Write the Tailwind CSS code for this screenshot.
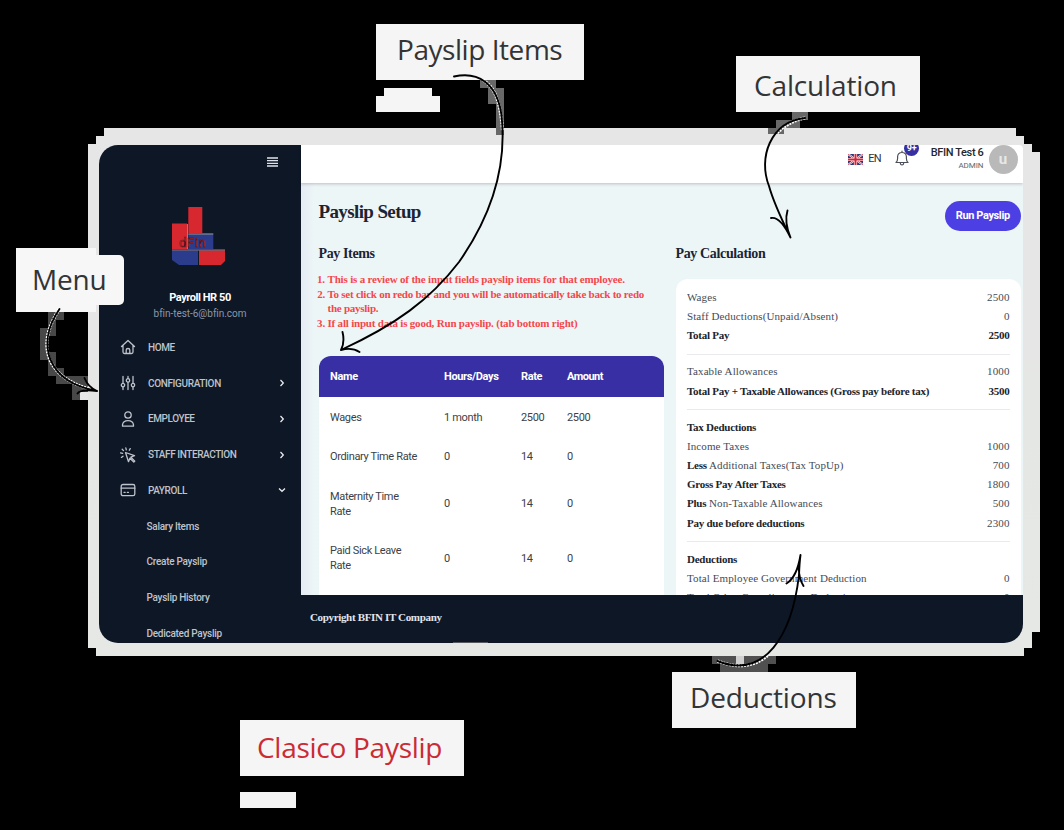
<!DOCTYPE html>
<html lang="en">
<head>
<meta charset="utf-8">
<title>Clasico Payslip</title>
<script src="https://cdn.jsdelivr.net/npm/@tailwindcss/browser@4"></script>
</head>
<body class="relative h-[830px] w-[1064px] overflow-hidden bg-black pt-32 pl-[88px]">

<!-- Device frame -->
<div class="h-[528px] w-[952px] bg-linear-to-b from-[#e5e6e5] to-[#e6e8e5] pt-[17px] pl-[11px] [clip-path:polygon(16px_0,928px_0,928px_8px,936px_8px,936px_16px,944px_16px,944px_24px,952px_24px,952px_504px,944px_504px,944px_520px,936px_520px,936px_528px,8px_528px,8px_520px,0_520px,0_16px,8px_16px,8px_8px,16px_8px)]">
  <div class="flex h-[498px] w-[923.5px] overflow-hidden rounded-l-[19px] rounded-tr-[4px] rounded-br-[19px] bg-[#edf6f7] font-['Roboto',sans-serif]">

    <!-- Sidebar -->
    <aside class="flex h-full w-[202px] shrink-0 flex-col overflow-hidden bg-[#0e1726] text-[#bfc3cb]">
      <div class="flex justify-end pt-3 pr-[23px]">
        <svg class="h-2.5 w-[11px]" viewBox="0 0 11 10" stroke="#dfe3ea" stroke-width="1.3"><path d="M0 1h11M0 3.7h11M0 6.3h11M0 9h11"/></svg>
      </div>
      <div class="flex flex-col items-center pt-10">
        <svg class="mr-[3px] h-[59px] w-[53px]" viewBox="0 0 53 59">
          <path d="M16.3 0h14v26h-14z" fill="#d7282f"/>
          <path d="M0 16.5h15V42H0z" fill="#d7282f"/>
          <path d="M16.3 27.500h25V42h-25z" fill="#2b3c8c"/>
          <path d="M16.300 27h25" stroke="#c9cbe0" stroke-width=".8"/>
          <path d="M0 43.500h26V58H7L0 53z" fill="#2b3c8c"/>
          <path d="M27 43.500h26V54l-4 4H27z" fill="#d7282f"/>
          <path d="M0 43h53M15.500 17v25" stroke="#c9b0b8" stroke-width=".7"/>
          <text x="7" y="40" font-family="Roboto" font-size="13" fill="#e0392f" stroke="#3a1020" stroke-width=".5" textLength="27">dFin</text>
        </svg>
        <p class="mt-[24px] text-[11px] leading-4 font-bold tracking-[-0.43px] text-white">Payroll HR 50</p>
        <p class="text-[10px] leading-4 tracking-[-0.04px] text-[#8d97a8]">bfin-test-6@bfin.com</p>
      </div>
      <nav class="mt-[7.500px] text-[10px] font-medium tracking-[-0.42px]">
        <a class="flex h-[35.750px] items-center pr-[15px] pl-[21px]">
          <svg class="mr-[12px] h-4 w-4" viewBox="0 0 16 16" fill="none" stroke="#bfc3cb" stroke-width="1.3" stroke-linejoin="round" stroke-linecap="round"><path d="M1.500 7.500 8 1.500l6.500 6M3 6.500V13q0 1.500 1.500 1.500h7Q13 14.500 13 13V6.500M6.200 14.500V11q0-1.500 1.800-1.500T9.800 11v3.500"/></svg>HOME</a>
        <a class="flex h-[35.750px] items-center pr-[15px] pl-[21px]">
          <svg class="mr-[12px] h-4 w-4" viewBox="0 0 16 16" fill="none" stroke="#bfc3cb" stroke-width="1.300" stroke-linecap="round"><path d="M3 1.500v6.700M3 12v2.500M8 1.500v2M8 7.300v7.200M13 1.500v6.700M13 12v2.500"/><circle cx="3" cy="10.100" r="1.700"/><circle cx="8" cy="5.400" r="1.700"/><circle cx="13" cy="10.100" r="1.700"/></svg><span class="grow tracking-[-0.35px]">CONFIGURATION</span>
          <svg class="h-2 w-2" viewBox="0 0 8 8" fill="none" stroke="#e8eaee" stroke-width="1.300"><path d="m2.500 1 2.800 3-2.800 3"/></svg></a>
        <a class="flex h-[35.750px] items-center pr-[15px] pl-[21px]">
          <svg class="mr-[12px] h-4 w-4" viewBox="0 0 16 16" fill="none" stroke="#bfc3cb" stroke-width="1.300" stroke-linejoin="round"><circle cx="8" cy="4" r="3.200"/><path d="M2.500 15.200v-1.400Q3 9.700 8 9.700t5.500 4.100v1.400z"/></svg><span class="grow">EMPLOYEE</span>
          <svg class="h-2 w-2" viewBox="0 0 8 8" fill="none" stroke="#e8eaee" stroke-width="1.300"><path d="m2.500 1 2.800 3-2.800 3"/></svg></a>
        <a class="flex h-[35.750px] items-center pr-[15px] pl-[21px]">
          <svg class="mr-[12px] h-4 w-4" viewBox="0 0 16 16" fill="none" stroke="#bfc3cb" stroke-width="1.300" stroke-linejoin="round" stroke-linecap="round"><path d="m5.500 5.500 9 3.200-3.600 1.500 3.900 3.900-1 1-3.900-3.900-1.400 3.500zM5.800.8l.5 2M2.200 2.200l1.300 1.400M.6 5.800l2 .5M1.400 10.400l1.600-1.200M10.200 1.600 9.300 3.200"/></svg><span class="grow">STAFF INTERACTION</span>
          <svg class="h-2 w-2" viewBox="0 0 8 8" fill="none" stroke="#e8eaee" stroke-width="1.300"><path d="m2.500 1 2.800 3-2.800 3"/></svg></a>
        <a class="flex h-[35.750px] items-center pr-[15px] pl-[21px]">
          <svg class="mr-[12px] h-4 w-4" viewBox="0 0 16 16" fill="none" stroke="#bfc3cb" stroke-width="1.300" stroke-linecap="round"><rect x="1.200" y="2.500" width="13.600" height="11.200" rx="1.800"/><path d="M1.200 6.200h13.600M4 10.300h1.200M7.300 10.300h1.200"/></svg><span class="grow">PAYROLL</span>
          <svg class="h-2 w-2" viewBox="0 0 8 8" fill="none" stroke="#e8eaee" stroke-width="1.300"><path d="m1 2.500 3 2.800 3-2.800"/></svg></a>
        <div class="pl-[47.500px] tracking-[-0.27px]">
          <a class="flex h-[35.750px] items-center">Salary Items</a>
          <a class="flex h-[35.750px] items-center">Create Payslip</a>
          <a class="flex h-[35.750px] items-center">Payslip History</a>
          <a class="flex h-[35.750px] items-center">Dedicated Payslip</a>
        </div>
      </nav>
    </aside>

    <div class="flex min-w-0 grow flex-col">
      <!-- Top bar -->
      <header class="z-10 flex h-[38px] shrink-0 justify-end bg-white pr-[5px] shadow-[0_1px_3px_rgba(0,0,0,0.22)]">
        <svg class="mt-[9px] h-[11px] w-[15px]" viewBox="0 0 15 11"><path fill="#283a7e" d="M0 0h15v11H0z"/><path d="m0 0 15 11M15 0 0 11" stroke="#fff" stroke-width="1.900"/><path d="m0 0 15 11M15 0 0 11" stroke="#d3243a" stroke-width=".8"/><path d="M7.500 0v11M0 5.500h15" stroke="#fff" stroke-width="3.200"/><path d="M7.500 0v11M0 5.500h15" stroke="#d3243a" stroke-width="2"/></svg>
        <span class="mt-[6px] ml-[5px] w-[14px] text-[11px] leading-4 tracking-[-0.7px] text-[#333]">EN</span>
        <div class="relative ml-[12px] w-4">
          <svg class="mt-[5px] h-4 w-4" viewBox="0 0 16 16" fill="none" stroke="#4b4f57" stroke-width="1.200" stroke-linecap="round" stroke-linejoin="round"><path d="M2 12.500q1.600-1.500 1.600-4V6.800Q3.800 2.500 8 2.500t4.400 4.300v1.700q0 2.500 1.600 4zM8 2.500V1.200M6.200 13q.3 2 1.800 2t1.800-2"/></svg>
          <span class="absolute -top-[4px] left-[10px] flex h-[15px] w-[15px] items-center justify-center rounded-full bg-[#3730a3] text-[9px] leading-none font-bold tracking-[-0.2px] text-white">9+</span>
        </div>
        <div class="ml-[20.500px] flex flex-col items-end">
          <p class="text-[11px] leading-[15px] font-medium tracking-[-0.36px] text-[#26282e]">BFIN Test 6</p>
          <p class="text-[8px] leading-[12px] tracking-[-0.050px] text-[#666]">ADMIN</p>
        </div>
        <div class="ml-[5px] flex h-[29px] w-[29px] items-center justify-center rounded-full bg-[#b9b9b9] pb-px text-[15px] font-bold text-[#e8e8e8]">u</div>
      </header>

      <!-- Page content -->
      <main class="flex h-[412px] shrink-0 flex-col overflow-hidden bg-linear-to-r from-[#e6ebf4] to-[#edf6f7] to-[14px] pr-[1.500px] pl-[17.500px]">
        <div class="flex h-[48px] items-start justify-between pt-[18px]">
          <h1 class="font-['Liberation_Serif',serif] text-[19px] leading-[21px] font-bold tracking-[-0.62px] text-[#1c2434]">Payslip Setup</h1>
          <button class="flex h-[29.500px] w-[76.500px] items-center justify-center rounded-full bg-[#4c3fe4] text-[11px] font-bold tracking-[-0.38px] text-white">Run Payslip</button>
        </div>
        <div class="flex gap-[11.500px]">
          <section class="w-[345.500px] shrink-0">
            <h2 class="mt-[14px] font-['Liberation_Serif',serif] text-sm leading-[18px] font-bold tracking-[-0.38px] text-[#1c2434]">Pay Items</h2>
            <ol class="mt-[9.500px] list-outside list-decimal pl-[9px] font-['Liberation_Serif',serif] text-[11px] leading-[14.600px] font-bold tracking-[-0.2px] text-[#f5474b]">
              <li class="tracking-[-0.180px]">This is a review of the input fields payslip items for that employee.</li>
              <li class="tracking-[-0.250px]">To set click on redo bar and you will be automatically take back to redo<br>the payslip.</li>
              <li>If all input data is good, Run payslip. (tab bottom right)</li>
            </ol>
            <table class="mt-[25.500px] w-full table-fixed border-separate border-spacing-0 overflow-hidden rounded-t-xl bg-white text-left text-[11px] leading-[15px] tracking-[-0.35px] text-[#3b3f47]">
              <colgroup><col class="w-[125.500px]"><col class="w-[77px]"><col class="w-[46px]"><col></colgroup>
              <thead class="bg-[#372fa3] text-white">
                <tr class="h-[41.500px]"><th class="pl-[11.500px]">Name</th><th>Hours/Days</th><th>Rate</th><th class="tracking-[-0.5px]">Amount</th></tr>
              </thead>
              <tbody>
                <tr class="h-[39.500px]"><td class="pl-[11.500px]">Wages</td><td>1 month</td><td>2500</td><td>2500</td></tr>
                <tr class="h-[39.500px]"><td class="pl-[11.500px]">Ordinary Time Rate</td><td>0</td><td>14</td><td>0</td></tr>
                <tr class="h-[54.500px]"><td class="pl-[11.500px]">Maternity Time<br>Rate</td><td>0</td><td>14</td><td>0</td></tr>
                <tr class="h-[54.500px]"><td class="pl-[11.500px]">Paid Sick Leave<br>Rate</td><td>0</td><td>14</td><td>0</td></tr>
                <tr class="h-[39.500px]"><td></td><td></td><td></td><td></td></tr>
              </tbody>
            </table>
          </section>

          <section class="grow font-['Liberation_Serif',serif]">
            <h2 class="mt-[14px] text-sm leading-[18px] font-bold tracking-[-0.360px] text-[#1c2434]">Pay Calculation</h2>
            <div class="mt-[16px] flex flex-col rounded-t-xl bg-white px-[11.500px] pt-[9.500px] text-[11px] leading-[19.150px] tracking-[0.1px] text-[#454b57] [&_b]:tracking-[-0.25px] [&_b]:text-[#20242c] [&_p]:flex [&_p]:justify-between [&_p]:whitespace-nowrap">
              <p><span>Wages</span><span>2500</span></p>
              <p><span>Staff Deductions(Unpaid/Absent)</span><span>0</span></p>
              <p><b>Total Pay</b><b>2500</b></p>
              <hr class="mt-[8.500px] mb-[7.500px] border-[#e8eaed]">
              <p><span>Taxable Allowances</span><span>1000</span></p>
              <p><b>Total Pay + Taxable Allowances (Gross pay before tax)</b><b>3500</b></p>
              <hr class="mt-[8.500px] mb-[7.500px] border-[#e8eaed]">
              <p><b>Tax Deductions</b></p>
              <p><span>Income Taxes</span><span>1000</span></p>
              <p><span><b>Less</b> Additional Taxes(Tax TopUp)</span><span>700</span></p>
              <p><b>Gross Pay After Taxes</b><span>1800</span></p>
              <p><span><b>Plus</b> Non-Taxable Allowances</span><span>500</span></p>
              <p><b>Pay due before deductions</b><span>2300</span></p>
              <hr class="mt-[8.500px] mb-[7.500px] border-[#e8eaed]">
              <p><b>Deductions</b></p>
              <p><span>Total Employee Government Deduction</span><span>0</span></p>
              <p><span>Total Other Compliance or Deductions</span><span>0</span></p>
            </div>
          </section>
        </div>
      </main>

      <footer class="flex grow flex-col bg-[#0e1726] pl-[9px] font-['Liberation_Serif',serif] text-[11px] font-bold tracking-[-0.340px] text-[#e2e5ec]">
        <p class="pt-[14px] leading-4">Copyright BFIN IT Company</p>
        <div class="mt-auto ml-[143px] h-px w-[35px] bg-[#55585f]"></div>
      </footer>
    </div>
  </div>
</div>

<!-- Callout labels -->
<div class="font-['Open_Sans',sans-serif] text-[28px] leading-none whitespace-nowrap text-[#333436]">
  <div class="absolute top-6 left-[376px] h-14 w-52 bg-[#f5f5f5] pt-[11px] pl-[21px] tracking-[-0.450px]">Payslip Items</div>
  <div class="absolute top-[88px] left-[384px] h-2 w-12 bg-[#f5f5f5]"></div>
  <div class="absolute top-24 left-[376px] h-4 w-16 bg-[#f5f5f5]"></div>
  <div class="absolute top-14 left-[736px] h-14 w-[184px] bg-[#f5f5f5] pt-[15px] pl-[18px] tracking-[-0.150px]">Calculation</div>
  <div class="absolute top-[248px] left-4 h-16 w-20 bg-[#f7f7f7]"></div>
  <div class="absolute top-[255px] left-4 h-[50px] w-[107.500px] rounded-r-[5px] bg-[#f7f7f7] pt-[10px] pl-[16px] tracking-[-0.2px]">Menu</div>
  <div class="absolute top-[672px] left-[672px] h-14 w-[184px] bg-[#f5f5f5] pt-[11px] pl-[18px] tracking-[-0.150px]">Deductions</div>
  <div class="absolute top-[720px] left-[240px] h-14 w-56 bg-[#f5f5f5] pt-[13px] pl-[17px] tracking-[-0.270px] text-[#cb2b34]">Clasico Payslip</div>
  <div class="absolute top-[792px] left-[240px] h-4 w-14 bg-[#f5f5f5]"></div>
</div>

<!-- Callout arrows -->
<svg class="absolute top-0 left-0 h-[830px] w-[1064px]" viewBox="0 0 1064 830" fill="none" stroke-linecap="round" stroke-linejoin="round">
  <g fill="#686868">
    <path d="M480 80h16v8h8v47h-8v-31h-8V88h-8z"/>
    <path d="M792 112h16v8h-8v8h-16v6h-16v-6h8v-8h16z"/>
    <path d="M48 312h16v8h-8v16h-8v16h8v16h8v8h24v24H72v-16H56v-8h-8v-16h-8v-32h8z" fill="#484848"/>
    <path d="M712 656h64v8h-8v8h-48v-8h-8z" fill="#505050"/>
    <path d="M736 656h8v8h-8z" fill="#d0d0d0"/>
    <path d="M80 392h8v8h-8z" fill="#e8e8e8"/>
  </g>
  <g stroke="#fff" stroke-width="3.200" stroke-dasharray="2 1" stroke-linecap="butt">
    <path d="M483 80C495 88 500 100 502.500 130"/>
    <path d="M805 118Q789 121 777 133"/>
    <path d="M59.500 309C35 345 47 377 88 388.500"/>
    <path d="M717.500 661C740 670 758 665 769 654"/>
  </g>
  <g stroke="#000" stroke-width="1.900">
    <path d="M454 76.500C478 71 497 83 501.500 115C507 165 492 215 459 262C430 300 395 325 341 350M342.500 332Q345 342 341 350Q352 347 359.500 352"/>
    <path d="M805 118C770 122 758 158 769 186C774 204 782 220 790.500 237.500M771 218Q780 216 790.500 237.500Q784 222 787.500 210.500"/>
    <path d="M59.500 309C35 345 48 382 97 391M84.500 378Q88 387 97 391Q80 389 77.500 393.500"/>
    <path d="M717.500 661C765 680 792 635 799 575Q799.500 562 800.500 555M786.500 583.500Q797 577 800.500 555Q796 574 803.500 586"/>
  </g>
</svg>
</body>
</html>
